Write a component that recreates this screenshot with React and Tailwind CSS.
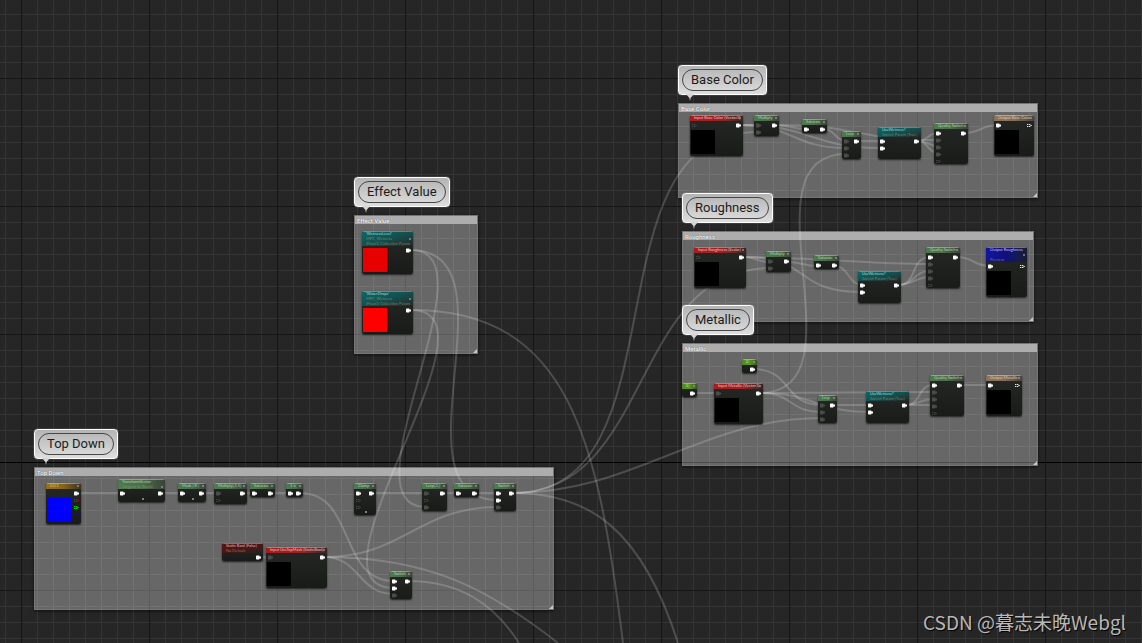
import React from 'react';

const comments = [
  { title: 'Base Color', x: 678, y: 65, w: 360, h: 95 },
  { title: 'Roughness', x: 682, y: 193, w: 352, h: 91 },
  { title: 'Metallic', x: 682, y: 305, w: 356, h: 123 },
  { title: 'Effect Value', x: 354, y: 177, w: 124, h: 139 },
  { title: 'Top Down', x: 34, y: 429, w: 520, h: 143 },
];

const useWetness = { title: 'UseWetness?', sub: ['Switch Param (True)'], kind: 'teal', w: 43, h: 32, ins: ['on', 'on'], outs: ['on'] };
const quality = { title: 'Quality Switch', kind: 'green', w: 34, h: 41, ins: ['on', 'off', 'off', 'off', 'dim'], outs: ['on'], mark: true };
const saturate = { title: 'Saturate', kind: 'green', w: 25, h: 14, ins: ['on'], outs: ['on'], mark: true };
const multiply = { title: 'Multiply', kind: 'green', w: 25, h: 21, ins: ['off', 'off'], outs: ['on'], mark: true };
const lerp = { title: 'Lerp', kind: 'green', w: 19, h: 28, ins: ['off', 'off', 'off'], outs: ['on'], mark: true };
const switchNode = { title: 'Switch', kind: 'green', w: 22, h: 28, ins: ['on', 'on', 'off'], outs: ['on'], mark: true };
const constant = { title: '0', kind: 'lime', w: 15, h: 14, ins: [], outs: ['on'], mark: true };
const param = { sub: ['MPC_Wetness', '(Float1) Collection Param'], kind: 'teal', w: 51, h: 43, ins: [], outs: ['on'], preview: 'red', mark: true };

const nodes = [
  // base color
  { title: 'Input Base Color (Vector3)', kind: 'red', x: 690, y: 115, w: 53, h: 41, ins: ['dim'], outs: ['on'], preview: 'black', mark: true },
  { ...multiply, x: 754, y: 115 },
  { ...saturate, x: 802, y: 119 },
  { ...lerp, x: 842, y: 131 },
  { ...useWetness, x: 878, y: 127 },
  { ...quality, x: 934, y: 123 },
  { title: 'Output Base Color', kind: 'tan', x: 994, y: 115, w: 40, h: 41, ins: ['on'], outs: ['open'], preview: 'black', mark: true },
  // roughness
  { title: 'Input Roughness (Scalar)', kind: 'red', x: 694, y: 247, w: 52, h: 41, ins: ['dim'], outs: ['on'], preview: 'black', mark: true },
  { ...multiply, x: 766, y: 251 },
  { ...saturate, x: 814, y: 255 },
  { ...useWetness, x: 858, y: 271 },
  { ...quality, x: 926, y: 247 },
  { title: 'Output Roughness', sub: ['', 'Preview'], kind: 'blue', x: 986, y: 247, w: 41, h: 50, ins: ['on'], outs: ['open'], preview: 'black', mark: true },
  // metallic
  { ...constant, x: 742, y: 359 },
  { ...constant, x: 682, y: 383 },
  { title: 'Input Metallic (Vector3)', kind: 'red', x: 714, y: 383, w: 49, h: 41, ins: ['off'], outs: ['on'], preview: 'black', mark: true },
  { ...lerp, x: 818, y: 395 },
  { ...useWetness, x: 866, y: 391 },
  { ...quality, x: 930, y: 375 },
  { title: 'Output Metallic', kind: 'tan', x: 986, y: 375, w: 36, h: 41, ins: ['on'], outs: ['open'], preview: 'black', mark: true },
  // effect value
  { ...param, title: "'WetnessLevel'", x: 362, y: 231, preview: 'darkred' },
  { ...param, title: "'WaterDrops'", x: 362, y: 291 },
  // top down
  { title: '0,0,1', kind: 'gold', x: 46, y: 483, w: 35, h: 41, ins: ['none'], outs: ['on', 'r', 'g', 'b'], preview: 'blue', mark: true },
  { title: 'TransformVector', sub: ['Tangent to World'], kind: 'green', x: 118, y: 479, w: 47, h: 23, ins: ['on'], outs: ['on'], mark: true, more: true },
  { title: 'Mask ( R )', kind: 'green', x: 178, y: 483, w: 28, h: 19, ins: ['on'], outs: ['on'], mark: true, more: true },
  { ...multiply, title: 'Multiply(,1.5)', x: 214, y: 483, w: 33, ins: ['off', 'dim'] },
  { ...saturate, x: 250, y: 483 },
  { ...saturate, title: '1-x', x: 286, y: 483, w: 17 },
  { title: 'Clamp', kind: 'green', x: 354, y: 483, w: 22, h: 32, ins: ['on', 'dim', 'dim'], outs: ['on'], mark: true, more: true },
  { ...lerp, title: 'Lerp(,1,)', x: 422, y: 483, w: 25, ins: ['off', 'dim', 'off'] },
  { ...saturate, x: 454, y: 483 },
  { ...switchNode, x: 494, y: 483 },
  { title: 'Static Bool (False)', sub: ['No Default'], kind: 'maroon', x: 222, y: 543, w: 41, h: 18, ins: [], outs: ['on'] },
  { title: 'Input UseTopMask (StaticBool)', kind: 'red', x: 266, y: 547, w: 61, h: 41, ins: ['off'], outs: ['on'], preview: 'black', mark: true },
  { ...switchNode, x: 390, y: 571 },
];

// [x1, y1, x2, y2, tangent]
const wires = [
  [740, 125, 758, 125], [740, 125, 846, 148], [740, 125, 882, 148], [776, 125, 806, 129],
  [776, 125, 938, 140], [824, 129, 846, 141], [858, 141, 882, 141],
  [918, 141, 938, 133], [918, 141, 938, 146], [918, 141, 938, 153], [964, 133, 998, 125],
  [743, 257, 770, 262], [743, 257, 862, 292, 70], [743, 257, 930, 264, 60], [787, 262, 818, 266],
  [835, 266, 862, 285], [898, 285, 930, 257, 20], [898, 285, 930, 271, 16], [898, 285, 930, 277, 14],
  [957, 257, 990, 266],
  [753, 369, 822, 405, 40], [693, 393, 718, 393], [760, 393, 822, 412, 34], [760, 393, 870, 412],
  [760, 393, 934, 392], [834, 405, 870, 405], [905, 405, 934, 385, 18], [905, 405, 934, 399],
  [905, 405, 934, 405], [961, 385, 990, 385],
  [760, 393, 846, 154, 108],
  [411, 250, 426, 507, 86], [411, 250, 498, 500, 110], [411, 310, 394, 588, 100],
  [78, 493, 122, 493], [162, 493, 182, 493], [203, 493, 218, 493], [243, 493, 254, 493],
  [272, 493, 290, 493], [300, 493, 394, 581, 56], [373, 493, 426, 493], [443, 493, 458, 493],
  [476, 493, 498, 493], [260, 557, 270, 557], [324, 557, 498, 507, 80], [324, 557, 394, 594, 36],
  [513, 493, 758, 132, 175], [513, 493, 770, 268, 140], [513, 493, 822, 418, 120],
];

// wires that run on past the visible part of the graph
const longWires = [
  'M411 310C570 310 598 440 623 643',
  'M513 493C590 493 642 530 678 643',
  'M324 557C430 557 490 590 558 643',
  'M408 581C460 581 494 604 519 643',
];

const wirePath = ([x1, y1, x2, y2, t = (x2 - x1) / 2]) =>
  `M${x1} ${y1}C${x1 + t} ${y1} ${x2 - t} ${y2} ${x2} ${y2}`;

const headers = {
  red: 'bg-linear-to-r from-[#a81c1c] via-[#a42020] to-[#3a2424] text-[#e8c8c8]',
  maroon: 'bg-linear-to-br from-[#5e1212] via-[#4a1616] to-[#222020] text-[#dbb]',
  green: 'bg-linear-to-r from-[#4f7a4f] via-[#4a6e4b] to-[#3a443a] text-[#b8d0b8]',
  lime: 'bg-linear-to-r from-[#4f8a1c] via-[#5a9426] to-[#3b5a20] text-[#c8e0a8]',
  teal: 'bg-linear-to-br from-[#0f6768] via-[#12504f] to-[#202626] text-[#a8d4d4]',
  tan: 'bg-linear-to-r from-[#8f7258] via-[#86705c] to-[#4c443c] text-[#dccbba]',
  blue: 'bg-linear-to-r from-[#1414a0] via-[#10107c] to-[#1a1a34] text-[#c4c4f4]',
  gold: 'bg-linear-to-r from-[#94701a] via-[#866518] to-[#3c3420] text-[#dcc890]',
};

const previews = {
  black: 'bg-black',
  blue: 'bg-[#0000ff]',
  red: 'bg-[#ff0000]',
  darkred: 'bg-[#e80000]',
};

const pinColors = {
  on: 'text-white',
  open: 'text-[#e8e8e8]',
  off: 'text-[#4a4c4a]',
  dim: 'text-[#444644]',
  none: 'text-transparent',
  r: 'text-[#e00000]',
  g: 'text-[#00e000]',
  b: 'text-[#0000e0]',
};

const Pin = ({ type }) => {
  const hollow = ['open', 'dim', 'r', 'g', 'b'].includes(type);
  return (
    <svg viewBox="0 0 5 7" className={`block w-[5px] h-[7px] ${pinColors[type]}`}>
      {hollow ? (
        <path d="M0 2H1.4V3H0ZM2 2H3.4V3H2ZM0 4H1.4V5H0ZM2 4H3.4V5H2ZM3.4 3H4.8V4H3.4Z" fill="currentColor" />
      ) : (
        <path d="M.6 1.5H3.2L3.6 2.5H5V4.5H3.6L3.2 5.5H.6L0 4.9V2.1Z" fill="currentColor" />
      )}
    </svg>
  );
};

const Node = ({ x, y, w, h, title, sub = [], kind, ins, outs, preview, mark, more }) => (
  <div
    className="absolute z-20 flex flex-col rounded-[2px] overflow-hidden bg-linear-to-b from-[#262826] to-[#191b19] shadow-[0_1px_2px_#000000b0] font-[Lato,sans-serif] text-[4px]"
    style={{ left: x, top: y, width: w, height: h }}
  >
    <div className={`relative shrink-0 px-1 border-t border-[#ffffff60] leading-[4px] whitespace-nowrap ${sub.length ? '' : 'pb-px'} ${headers[kind]}`}>
      <div>{title}</div>
      {sub.map((line, i) => (
        <div key={i} className="h-[5px] leading-[5px] text-[#a8a878] opacity-60">{line}</div>
      ))}
      {mark && <i className={`absolute right-[2px] size-[2px] bg-[#a0a0a0a0] ${sub.length ? 'top-[6px]' : 'top-px'}`} />}
    </div>
    <div className="flex justify-between px-[2px] pt-px">
      <div>
        {ins.map((type, i) => <Pin key={i} type={type} />)}
        {preview && <div className={`-ml-px mt-px size-6 ${previews[preview]}`} />}
      </div>
      <div>{outs.map((type, i) => <Pin key={i} type={type} />)}</div>
    </div>
    {more && <i className="absolute bottom-[2px] left-1/2 size-[2px] bg-[#808080]" />}
  </div>
);

const Comment = ({ title, x, y, w, h }) => (
  <section className="absolute flex flex-col items-start" style={{ left: x, top: y, width: w }}>
    <div className="relative z-30 p-[3px] rounded-[4px] border border-white bg-linear-to-b from-[#b4b4b4] to-[#dedede] shadow-[0_0_1px_#ffffff]">
      <h2 className="px-2 rounded-full border border-[#484848] font-[Roboto,sans-serif] text-[13px] leading-5 text-[#1c1c1c] whitespace-nowrap">
        {title}
      </h2>
      <svg viewBox="0 0 8 7" className="absolute top-full left-[7px] w-2 h-[7px]">
        <path d="M0 0H8L4.6 4L4 7L3.4 4Z" fill="#d4d4d4" />
      </svg>
    </div>
    <div className="flex flex-col justify-between items-end relative z-0 mt-2 w-full border border-[#ffffff18] bg-[#ffffff4d] shadow-[0_1px_3px_#000000a0]" style={{ height: h }}>
      <div className="w-full h-2 px-[2px] bg-[#adadad] font-[Roboto,sans-serif] font-medium text-[6px] leading-[9px] text-white [text-shadow:0_0_1px_#303030]">{title}</div>
      <svg viewBox="0 0 4 4" className="size-1">
        <path d="M4 0V4H0Z" fill="#c8c8c8" />
      </svg>
    </div>
  </section>
);

const Grid = () => (
  <>
    <div className="absolute inset-0 bg-[linear-gradient(to_right,#353535_1px,transparent_1px),linear-gradient(to_bottom,#353535_1px,transparent_1px)] bg-size-[16px_16px] bg-position-[5px_14px]" />
    <div className="absolute inset-0 bg-[linear-gradient(to_right,#161616_1px,transparent_1px),linear-gradient(to_bottom,#161616_1px,transparent_1px)] bg-size-[128px_128px] bg-position-[21px_78px]" />
    <div className="absolute inset-x-0 top-[462px] h-px bg-black" />
  </>
);

const App = () => (
  <main className="relative isolate flex items-end justify-end min-h-screen overflow-hidden bg-[#262626]">
    <Grid />
    {comments.map((c) => <Comment key={c.title} {...c} />)}
    <svg className="absolute inset-0 z-10 w-full h-full" fill="none" stroke="#ffffff" strokeOpacity="0.18" strokeWidth="2">
      {wires.map((wire, i) => <path key={i} d={wirePath(wire)} />)}
      {longWires.map((d) => <path key={d} d={d} />)}
    </svg>
    {nodes.map((node, i) => <Node key={i} {...node} />)}
    <p className="z-30 px-4 pb-[6px] font-['Noto_Sans_CJK_SC',sans-serif] text-[19px] leading-[30px] text-[#b8b8b8] [text-shadow:1px_1px_1px_#000000]">
      CSDN @暮志未晚Webgl
    </p>
  </main>
);

export default App;
